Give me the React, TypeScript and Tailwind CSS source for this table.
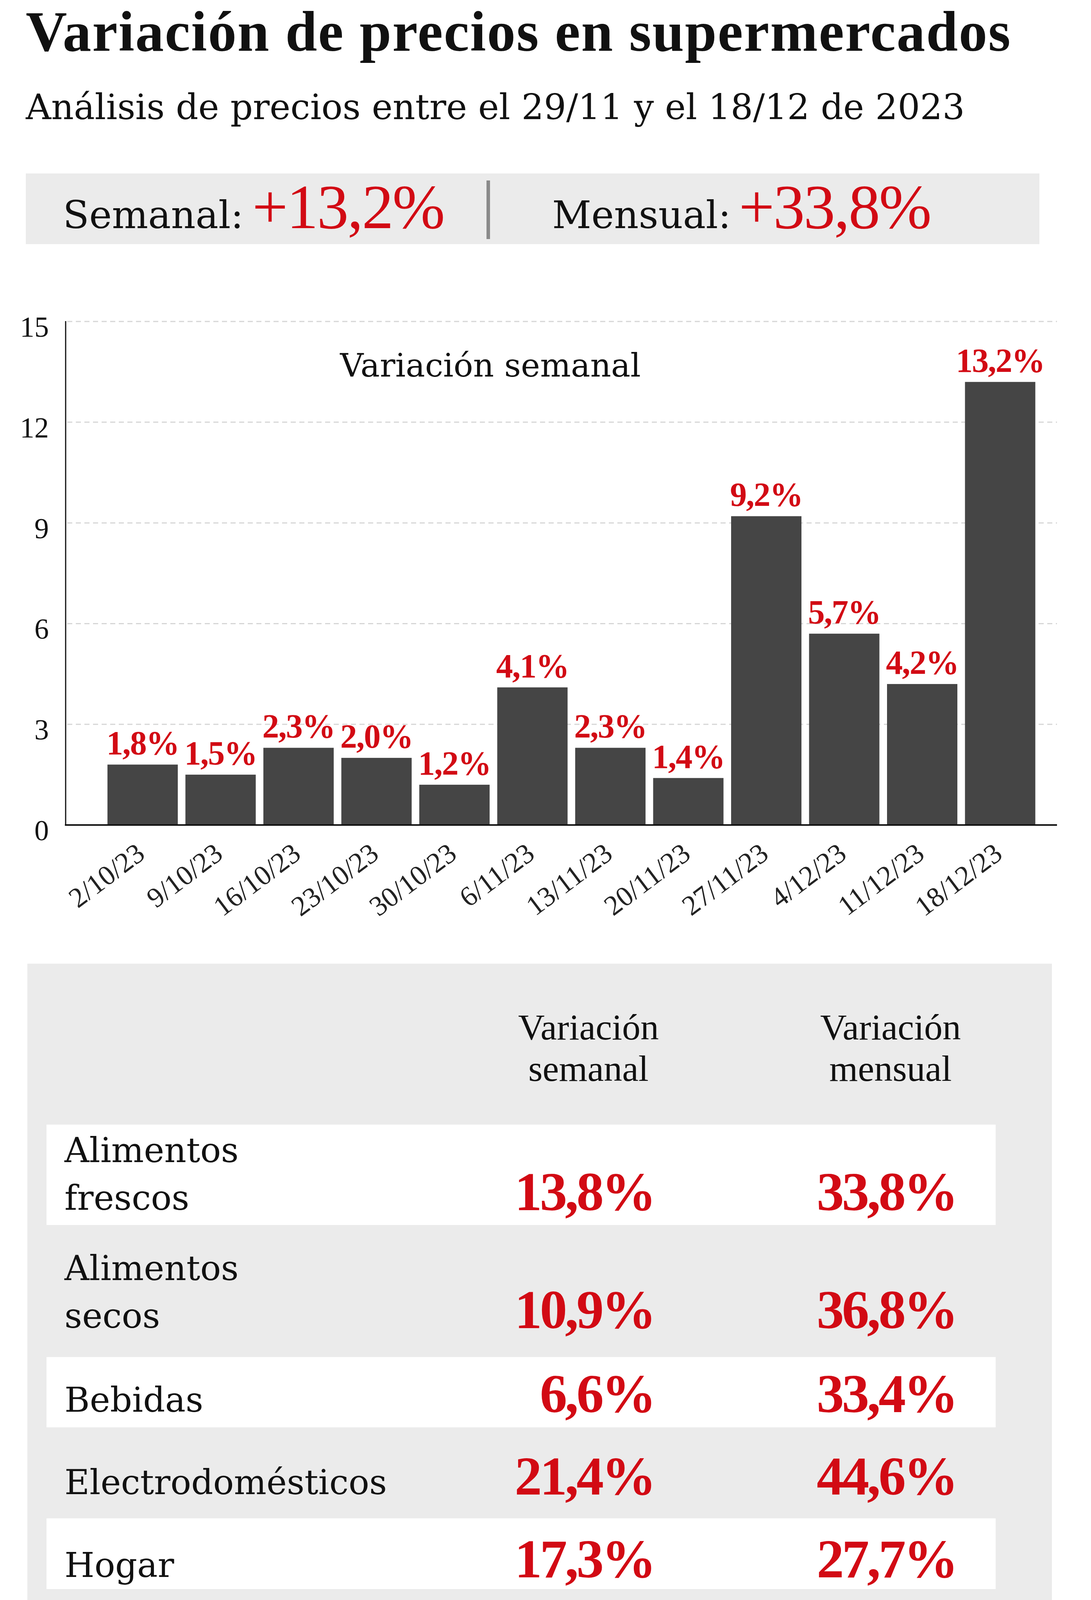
const semanas = [
  { fecha: "2/10/23", valor: 1.8 },
  { fecha: "9/10/23", valor: 1.5 },
  { fecha: "16/10/23", valor: 2.3 },
  { fecha: "23/10/23", valor: 2.0 },
  { fecha: "30/10/23", valor: 1.2 },
  { fecha: "6/11/23", valor: 4.1 },
  { fecha: "13/11/23", valor: 2.3 },
  { fecha: "20/11/23", valor: 1.4 },
  { fecha: "27/11/23", valor: 9.2 },
  { fecha: "4/12/23", valor: 5.7 },
  { fecha: "11/12/23", valor: 4.2 },
  { fecha: "18/12/23", valor: 13.2 },
];

// alturas y margen inferior de cada fila, medidos sobre la infografía
const rubros = [
  { nombre: ["Alimentos", "frescos"], semanal: "13,8%", mensual: "33,8%", h: "h-[257px]", pb: "pb-[8px]", bg: "bg-white" },
  { nombre: ["Alimentos", "secos"], semanal: "10,9%", mensual: "36,8%", h: "h-[338px]", pb: "pb-[44px]", bg: "" },
  { nombre: ["Bebidas"], semanal: "6,6%", mensual: "33,4%", h: "h-[180px]", pb: "pb-[9px]", bg: "bg-white" },
  { nombre: ["Electrodomésticos"], semanal: "21,4%", mensual: "44,6%", h: "h-[233px]", pb: "pb-[31px]", bg: "" },
  { nombre: ["Hogar"], semanal: "17,3%", mensual: "27,7%", h: "h-[181px]", pb: "pb-[0px]", bg: "bg-white" },
  { nombre: ["Limpieza"], semanal: "12,7%", mensual: "46,1%", h: "h-[259px]", pb: "pb-[46px]", bg: "" },
  { nombre: ["Juguetes"], semanal: "8,4%", mensual: "12,8%", h: "h-[183px]", pb: "pb-[15px]", bg: "bg-white" },
  { nombre: ["Perfumería"], semanal: "13,3%", mensual: "37,6%", h: "h-[244px]", pb: "pb-[49px]", bg: "" },
  { nombre: ["TOTAL"], semanal: "13,2%", mensual: "33,8%", h: "h-[183px]", pb: "pb-[20px]", bg: "bg-[#c8e4ef]" },
];

const ROJO = "#d20a14";
const BASE_Y = 2112;
const UNIDAD = 85.93;

function Grafico() {
  return (
    <svg className="block shrink-0" width={2792} height={1842} viewBox="0 625 2792 1842">
      {[3, 6, 9, 12, 15].map((v) => (
        <line key={v} x1={172} x2={2705} y1={BASE_Y - v * UNIDAD} y2={BASE_Y - v * UNIDAD} stroke="#d6d6d6" strokeWidth={3} strokeDasharray="13 9" />
      ))}
      {[0, 3, 6, 9, 12, 15].map((v) => (
        <text key={v} x={125} y={BASE_Y - v * UNIDAD + 39} textAnchor="end" fontFamily="'Liberation Serif', serif" fontSize={74} fill="#111">
          {v}
        </text>
      ))}
      <text x={1255} y={964} textAnchor="middle" fontFamily="'DejaVu Serif', serif" fontSize={83} fill="#111">
        Variación semanal
      </text>
      {semanas.map((s, i) => {
        const x = 275 + i * 199.5;
        const h = s.valor * UNIDAD;
        const cx = x + 90;
        return (
          <g key={s.fecha}>
            <rect x={x} y={BASE_Y - h} width={180} height={h} fill="#454545" />
            <text x={cx} y={BASE_Y - h - 26} textAnchor="middle" fontFamily="'Liberation Serif', serif" fontWeight={700} fontSize={86} fill={ROJO} letterSpacing={-2}>
              {s.valor.toFixed(1).replace(".", ",")}%
            </text>
            <text transform={`translate(${cx + 10} 2194) rotate(-37)`} textAnchor="end" fontFamily="'Liberation Serif', serif" fontSize={72} fill="#222">
              {s.fecha}
            </text>
          </g>
        );
      })}
      <line x1={168} x2={168} y1={822} y2={2114} stroke="#111" strokeWidth={3} />
      <line x1={166} x2={2705} y1={BASE_Y} y2={BASE_Y} stroke="#111" strokeWidth={4} />
    </svg>
  );
}

export default function App() {
  return (
    <div className="w-[2792px] h-[5191px] overflow-hidden bg-white flex flex-col text-[#111]">
      <h1 className="shrink-0 pl-[66px] font-['Liberation_Serif',serif] font-bold text-[146px] leading-[162px] tracking-[0.017em] whitespace-nowrap">
        Variación de precios en supermercados
      </h1>
      <p className="shrink-0 pl-[66px] mt-[62px] font-['DejaVu_Serif',serif] text-[90px] leading-[100px] whitespace-nowrap">
        Análisis de precios entre el 29/11 y el 18/12 de 2023
      </p>

      <div className="shrink-0 ml-[66px] mt-[120px] w-[2594px] h-[181px] bg-[#ebebeb] flex">
        <div className="w-[1179px] pl-[95px] pb-[14px] flex items-baseline self-end gap-[22px]">
          <span className="font-['DejaVu_Serif',serif] text-[98px] leading-none">Semanal:</span>
          <span className="font-['Liberation_Serif',serif] text-[162px] leading-none tracking-[-0.02em] text-[#d20a14]">+13,2%</span>
        </div>
        <div className="w-[9px] h-[150px] mt-[18px] bg-[#8a8a8a]" />
        <div className="pl-[159px] pb-[14px] flex items-baseline self-end gap-[20px]">
          <span className="font-['DejaVu_Serif',serif] text-[98px] leading-none">Mensual:</span>
          <span className="font-['Liberation_Serif',serif] text-[162px] leading-none tracking-[-0.02em] text-[#d20a14]">+33,8%</span>
        </div>
      </div>

      <Grafico />

      <div className="shrink-0 ml-[70px] w-[2622px] bg-[#ebebeb] pb-[43px]">
        <div className="h-[412px] pt-[109px] ml-[49px] w-[2429px] pr-[59px] flex font-['Liberation_Serif',serif] text-[94px] leading-[106px] text-center">
          <div className="flex-1" />
          <div className="w-[420px]">Variación<br />semanal</div>
          <div className="w-[353px]" />
          <div className="w-[420px]">Variación<br />mensual</div>
        </div>
        {rubros.map((r) => (
          <div key={r.nombre.join(" ")} className={`ml-[49px] w-[2429px] pl-[46px] pr-[101px] flex items-end ${r.h} ${r.pb} ${r.bg}`}>
            <div className="w-full flex items-end">
              <div className="flex-1 font-['DejaVu_Serif',serif] text-[88px] leading-[122px]">
                {r.nombre.map((n) => (
                  <div key={n}>{n}</div>
                ))}
              </div>
              <div className="w-[500px] mb-[7px] text-right font-['Liberation_Serif',serif] font-bold text-[140px] leading-none tracking-[-0.04em] text-[#d20a14]">
                {r.semanal}
              </div>
              <div className="w-[773px] mb-[7px] text-right font-['Liberation_Serif',serif] font-bold text-[140px] leading-none tracking-[-0.04em] text-[#d20a14]">
                {r.mensual}
              </div>
            </div>
          </div>
        ))}
      </div>

      <div className="shrink-0 mt-[115px] h-[3px] w-full bg-black" />
      <div className="shrink-0 mt-[43px] pl-[73px] pr-[27px] flex justify-between items-baseline font-['Liberation_Serif',serif]">
        <span className="text-[50px] leading-none">FUENTE: CESO</span>
        <span className="font-bold text-[52px] leading-none whitespace-nowrap">
          INFOGRAFÍA <span className="text-[66px]">L</span>A <span className="text-[66px]">C</span>APITAL
        </span>
      </div>
    </div>
  );
}
